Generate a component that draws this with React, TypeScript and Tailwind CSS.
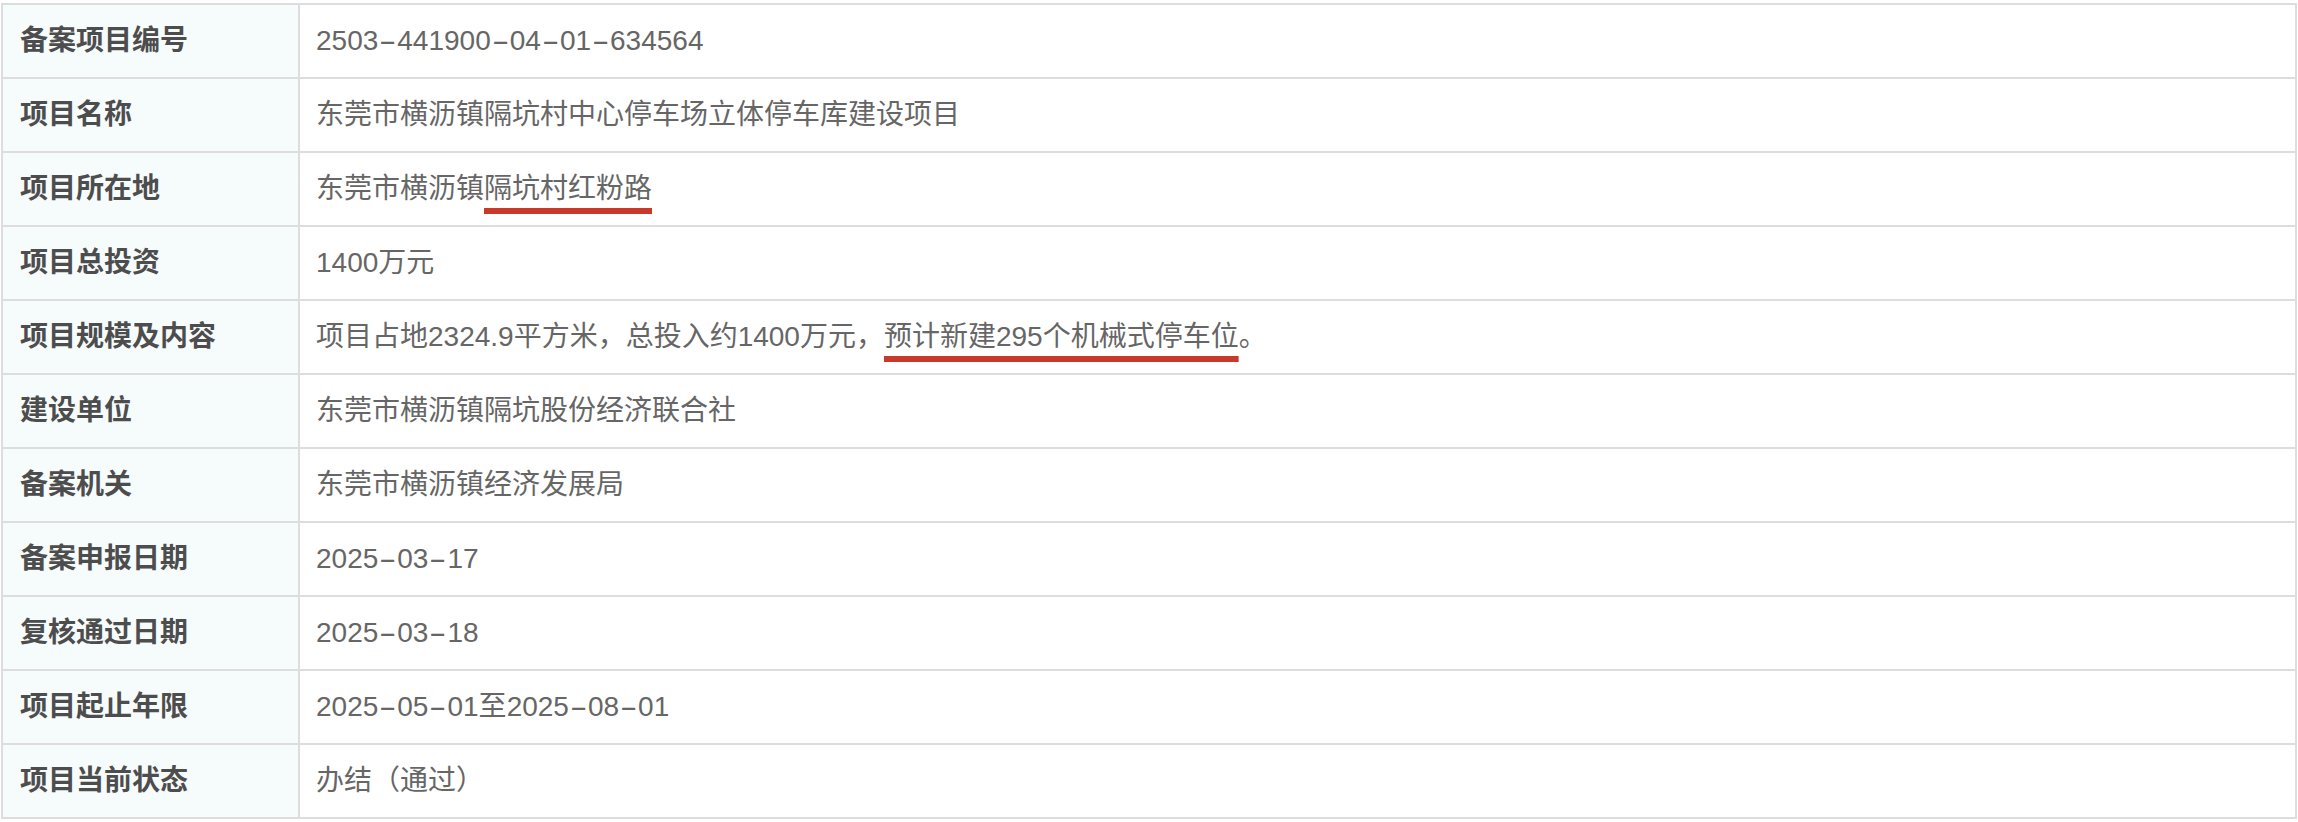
import React from 'react';

type Row = { label: string; value: React.ReactNode };

// dashes in the source font render wider than a plain hyphen
const Dashed: React.FC<{ text: string }> = ({ text }) => (
  <>
    {text.split('-').map((part, i) => (
      <React.Fragment key={i}>
        {i > 0 && (
          <span className="inline-block w-[19px] text-center">
            <span className="inline-block scale-x-[1.9]">-</span>
          </span>
        )}
        {part}
      </React.Fragment>
    ))}
  </>
);

const Mark: React.FC<{ children: React.ReactNode }> = ({ children }) => (
  <span className="underline decoration-[#c8392b] decoration-[6px] underline-offset-[10px] [text-decoration-skip-ink:none]">
    {children}
  </span>
);

const rows: Row[] = [
  { label: '备案项目编号', value: <Dashed text="2503-441900-04-01-634564" /> },
  { label: '项目名称', value: '东莞市横沥镇隔坑村中心停车场立体停车库建设项目' },
  { label: '项目所在地', value: <>东莞市横沥镇<Mark>隔坑村红粉路</Mark></> },
  { label: '项目总投资', value: '1400万元' },
  {
    label: '项目规模及内容',
    value: <>项目占地2324.9平方米，总投入约1400万元，<Mark>预计新建295个机械式停车位</Mark>。</>,
  },
  { label: '建设单位', value: '东莞市横沥镇隔坑股份经济联合社' },
  { label: '备案机关', value: '东莞市横沥镇经济发展局' },
  { label: '备案申报日期', value: <Dashed text="2025-03-17" /> },
  { label: '复核通过日期', value: <Dashed text="2025-03-18" /> },
  { label: '项目起止年限', value: <><Dashed text="2025-05-01" />至<Dashed text="2025-08-01" /></> },
  { label: '项目当前状态', value: '办结（通过）' },
];

export default function App() {
  return (
    <div className="w-[2298px] h-[822px] bg-white pt-[3px] pl-[1px] font-['Liberation_Sans','Noto_Sans_CJK_SC',sans-serif]">
      <div className="w-[2296px] border-2 border-[#dddddd]">
        {rows.map((row, i) => (
          <div
            key={row.label}
            className={'flex ' + (i < rows.length - 1 ? 'h-[74px] border-b-2 border-[#dddddd]' : 'h-[72px]')}
          >
            <div className="w-[297px] shrink-0 flex items-center pl-[17px] bg-[#f6fbfc] border-r-2 border-[#dddddd] text-[28px] font-semibold text-[#4d4d4d]">
              {row.label}
            </div>
            <div className="flex-1 flex items-center pl-[16px] text-[28px] text-[#666666]">
              <span>{row.value}</span>
            </div>
          </div>
        ))}
      </div>
    </div>
  );
}
